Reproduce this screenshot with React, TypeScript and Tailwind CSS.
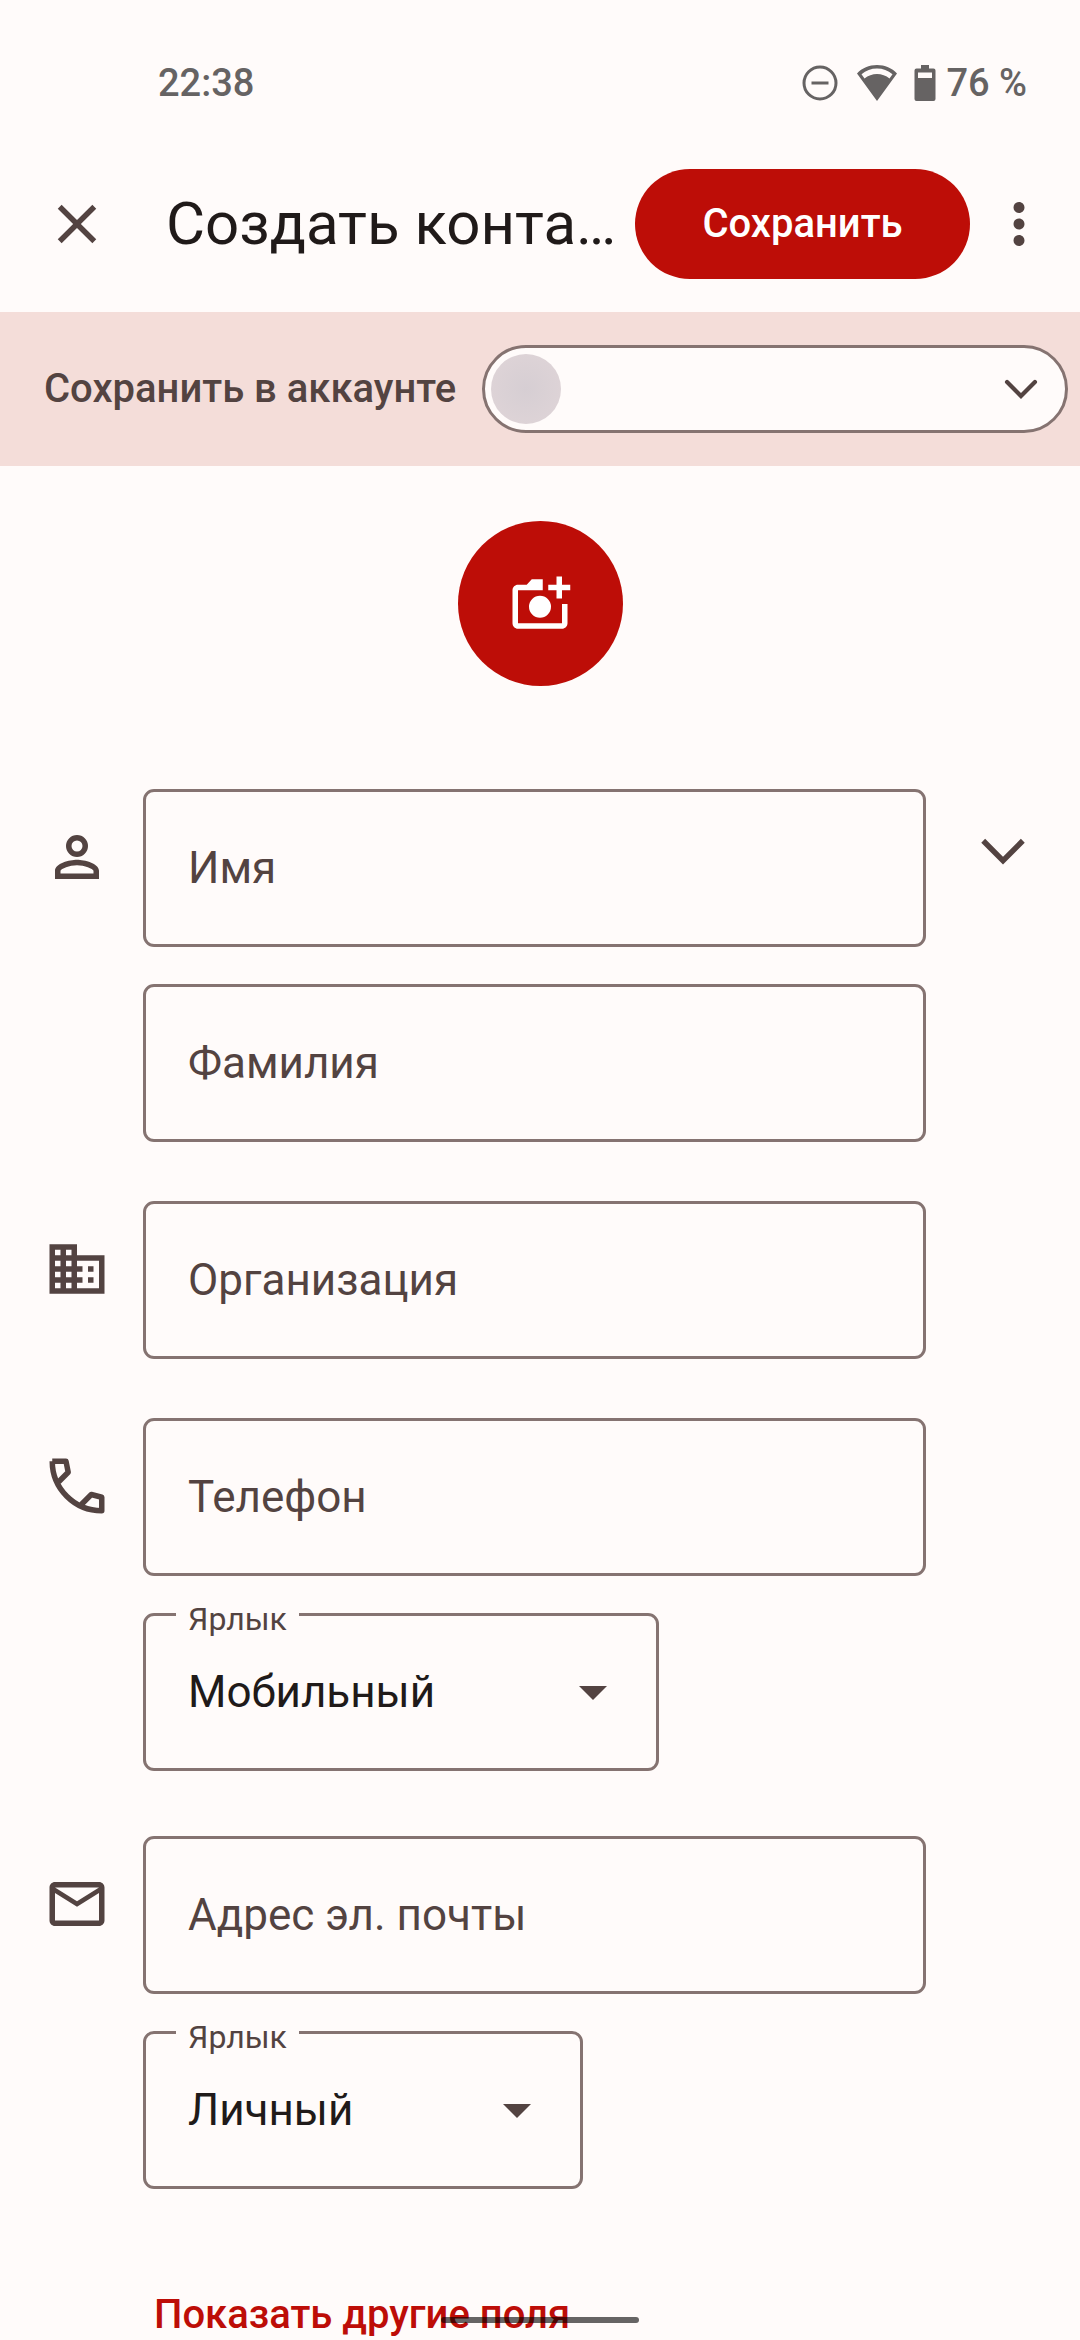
import type { ReactNode } from "react"
import { MdClose, MdMoreVert } from "react-icons/md"

const icons = {
    person: "M12 4a4 4 0 1 0 0 8 4 4 0 0 0 0-8zm0 2a2 2 0 1 1 0 4 2 2 0 0 1 0-4zM12 13c-2.67 0-8 1.34-8 4v3h16v-3c0-2.66-5.33-4-8-4zm6 5H6v-.99C6.2 16.29 9.3 15 12 15s5.8 1.29 6 2v1z",
    company: "M12 7V3H2v18h20V7H12zM6 19H4v-2h2v2zm0-4H4v-2h2v2zm0-4H4V9h2v2zm0-4H4V5h2v2zm4 12H8v-2h2v2zm0-4H8v-2h2v2zm0-4H8V9h2v2zm0-4H8V5h2v2zm10 12h-8v-2h2v-2h-2v-2h2v-2h-2V9h8v10zm-2-8h-2v2h2v-2zm0 4h-2v2h2v-2z",
    mail: "M22 6c0-1.1-.9-2-2-2H4c-1.1 0-2 .9-2 2v12c0 1.1.9 2 2 2h16c1.1 0 2-.9 2-2V6zm-2 0l-8 5-8-5h16zm0 12H4V8l8 5 8-5v10z",
    addPhoto: "M13 3H9L7.17 5H4c-1.1 0-2 .9-2 2v12c0 1.1.9 2 2 2h16c1.1 0 2-.9 2-2v-7h-2v7H4V7h9V3zM18 2h2v3h3v2h-3v3h-2V7h-3V5h3V2zM12 9a4 4 0 1 0 0 8 4 4 0 0 0 0-8z",
}

function Icon({ path }: { path: string }) {
    return (
        <svg viewBox="0 0 24 24" className="size-[66px]" fill="currentColor" aria-hidden="true">
            <path d={path} />
        </svg>
    )
}

function PhoneIcon() {
    return (
        <svg viewBox="0 0 24 24" className="size-[66px]" fill="none" stroke="currentColor" strokeWidth="2" strokeLinejoin="round" aria-hidden="true">
            <path d="M3 3A18 18 0 0 0 21 21V16.1L17.2 15.1L13.3 19M3 3H8L8.8 7L5 10.8" />
        </svg>
    )
}

function TextField({ id, label, type = "text" }: { id: string; label: string; type?: string }) {
    return (
        <div className="relative">
            <input
                id={id}
                type={type}
                placeholder=" "
                className="peer block h-[158px] w-full rounded-[11px] border-3 border-[#857371] bg-transparent px-[42px] text-[44px] text-[#201a19] outline-none"
            />
            <label
                htmlFor={id}
                className="pointer-events-none absolute inset-y-0 left-[45px] hidden items-center text-[44px] text-[#534341] peer-placeholder-shown:flex"
            >
                {label}
            </label>
        </div>
    )
}

function LabelSelect({ id, options, className }: { id: string; options: string[]; className: string }) {
    return (
        <div className={`relative mt-[37px] ${className}`}>
            <select
                id={id}
                className="block h-[158px] w-full appearance-none rounded-[11px] border-3 border-[#857371] bg-transparent px-[42px] text-[44px] text-[#201a19] outline-none"
            >
                {options.map((option) => (
                    <option key={option}>{option}</option>
                ))}
            </select>
            <label htmlFor={id} className="absolute -top-[14px] left-[33px] bg-[#fffbfa] px-3 text-[32px] leading-[40px] text-[#534341]">
                Ярлык
            </label>
            <svg viewBox="0 0 28 14" className="pointer-events-none absolute top-[73px] right-[52px] h-[14px] w-[28px] text-[#534341]" aria-hidden="true">
                <path d="M0 0h28L14 14z" fill="currentColor" />
            </svg>
        </div>
    )
}

function Row({ icon, action, children }: { icon: ReactNode; action?: ReactNode; children: ReactNode }) {
    return (
        <div className="grid grid-cols-[143px_1fr_154px] text-[#534341]">
            <div className="pt-[35px] pl-11">{icon}</div>
            <div>{children}</div>
            <div className="flex justify-center pt-[35px]">{action}</div>
        </div>
    )
}

function StatusBar() {
    return (
        <div className="flex h-[136px] justify-between pt-[60px] pr-[53px] pl-[158px] text-[38px] leading-[46px] font-medium text-[#666363]">
            <span>22:38</span>
            <div className="flex h-[46px] items-center">
                <svg viewBox="0 0 36 36" className="size-9" fill="none" stroke="currentColor" strokeWidth="3" aria-hidden="true">
                    <circle cx="18" cy="18" r="16" />
                    <path d="M9.500 18h17" />
                </svg>
                <svg viewBox="0 0 42 36" className="ml-[18px] h-9 w-[42px]" fill="currentColor" aria-hidden="true">
                    <path fillRule="evenodd" d="M21 0C13 0 6 3 1 8.500L21 36 41 8.500C36 3 29 0 21 0zM21 3.500c5.800 0 11 2 15.500 5.700L33.500 13.500C30 10.500 25.500 9 21 9s-9 1.500-12.500 4.500L5.500 9.200C10 5.500 15.200 3.500 21 3.500z" />
                </svg>
                <svg viewBox="0 0 22 36" className="ml-4 h-9 w-[22px]" fill="currentColor" aria-hidden="true">
                    <path fillRule="evenodd" d="M7 0h8v3.500h4.500a2 2 0 0 1 2 2V34a2 2 0 0 1-2 2h-17a2 2 0 0 1-2-2V5.500a2 2 0 0 1 2-2H7zM4 7.500v5.500h14V7.500z" />
                </svg>
                <span className="ml-[10px]">76 %</span>
            </div>
        </div>
    )
}

export default function App() {
    return (
        <div className="min-h-screen bg-[#fffbfa] font-['Roboto',sans-serif]">
            <StatusBar />

            <header className="flex h-[176px] items-center pr-[28px] pl-11 text-[#534341]">
                <button type="button" aria-label="Закрыть" className="shrink-0">
                    <MdClose className="size-[66px]" />
                </button>
                <h1 className="ml-[56px] min-w-0 flex-1 text-[60px] leading-[80px] whitespace-nowrap text-[#201a19]">Создать конта…</h1>
                <button type="button" className="h-[110px] w-[335px] shrink-0 rounded-full bg-[#bd0d07] text-[40px] font-medium text-white">
                    Сохранить
                </button>
                <button type="button" aria-label="Ещё" className="ml-4 shrink-0">
                    <MdMoreVert className="size-[66px]" />
                </button>
            </header>

            <div className="flex h-[154px] items-center bg-[#f4ddd9] pr-3 pl-[44px] text-[#534341]">
                <label htmlFor="account" className="w-[438px] shrink-0 text-[40px] font-medium whitespace-nowrap">
                    Сохранить в аккаунте
                </label>
                <div className="relative flex-1">
                    <select id="account" className="block h-[88px] w-full appearance-none rounded-full border-3 border-[#857371] bg-[#fffbfa] pl-24 text-[40px] outline-none">
                        <option></option>
                    </select>
                    <span className="pointer-events-none absolute top-[9px] left-[9px] size-[70px] rounded-full bg-radial from-[#d6ced3] to-[#e0d5d8]" />
                    <svg viewBox="0 0 24 24" className="pointer-events-none absolute top-[22px] right-[25px] size-11" fill="none" stroke="currentColor" strokeWidth="2.3" strokeLinecap="round" aria-hidden="true">
                        <path d="M4.400 8.200l7.600 7.600 7.600-7.600" />
                    </svg>
                </div>
            </div>

            <main>
                <div className="flex justify-center pt-[55px] pb-[103px]">
                    <button type="button" aria-label="Добавить фото" className="flex size-[165px] items-center justify-center rounded-full bg-[#bd0d07] text-white">
                        <Icon path={icons.addPhoto} />
                    </button>
                </div>

                <form>
                    <Row
                        icon={<Icon path={icons.person} />}
                        action={
                            <button type="button" aria-label="Развернуть" className="size-[66px]">
                                <svg viewBox="0 0 24 24" fill="none" stroke="currentColor" strokeWidth="2" aria-hidden="true">
                                    <path d="M4.800 6.100l7.200 7.200 7.200-7.200" />
                                </svg>
                            </button>
                        }
                    >
                        <div className="flex flex-col gap-[37px]">
                            <TextField id="first-name" label="Имя" />
                            <TextField id="last-name" label="Фамилия" />
                        </div>
                    </Row>
                    <div className="mt-[59px]">
                        <Row icon={<Icon path={icons.company} />}>
                            <TextField id="company" label="Организация" />
                        </Row>
                    </div>
                    <div className="mt-[59px]">
                        <Row icon={<PhoneIcon />}>
                            <TextField id="phone" label="Телефон" type="tel" />
                            <LabelSelect id="phone-label" options={["Мобильный"]} className="w-[516px]" />
                        </Row>
                    </div>
                    <div className="mt-[65px]">
                        <Row icon={<Icon path={icons.mail} />}>
                            <TextField id="email" label="Адрес эл. почты" type="email" />
                            <LabelSelect id="email-label" options={["Личный"]} className="w-[440px]" />
                        </Row>
                    </div>
                    <button type="button" className="mt-[103px] ml-[154px] block text-[40px] leading-[46px] font-medium text-[#bd0d07]">
                        Показать другие поля
                    </button>
                </form>
            </main>

            {/* system gesture handle */}
            <div className="fixed bottom-[17px] left-1/2 h-[6px] w-[198px] -translate-x-1/2 rounded-full bg-black/60" />
        </div>
    )
}
